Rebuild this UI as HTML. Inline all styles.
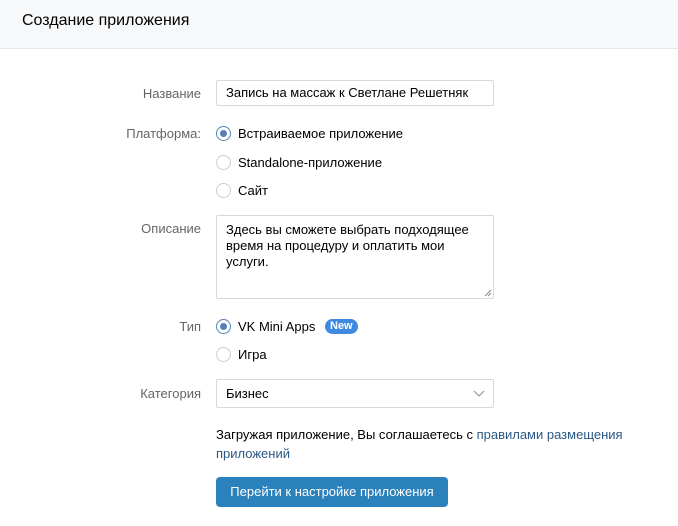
<!DOCTYPE html>
<html><head><meta charset="utf-8"><style>
*{box-sizing:border-box;margin:0;padding:0}
body{width:678px;height:526px;background:#fff;font-family:"Liberation Sans",sans-serif;font-size:13px;color:#000;position:relative;overflow:hidden}
.hd{position:absolute;left:0;top:0;width:678px;height:49px;background:#f7f8fa;border-bottom:1px solid #e7e8ec}
.hd span{position:absolute;left:22px;top:12px;font-size:16px;color:#000}
.lb{position:absolute;right:477px;color:#656565;text-align:right;white-space:nowrap}
.ab{position:absolute;white-space:nowrap}
.inp{position:absolute;left:216px;width:278px;border:1px solid #d3d9de;border-radius:2px;background:#fff;padding:0 9px}
.r{position:absolute;left:216px;width:15px;height:15px;border:1px solid #c5cdd5;border-radius:50%;background:#fff}
.r.on{border-color:#5181b8}
.r.on::after{content:"";position:absolute;left:3px;top:3px;width:7px;height:7px;border-radius:50%;background:#5181b8}
.rt{position:absolute;left:238px;white-space:nowrap}
</style></head><body>
<div class="hd"><span>Создание приложения</span></div>

<div class="lb" style="top:86px">Название</div>
<div class="inp" style="top:80px;height:26px;line-height:24px">Запись на массаж к Светлане Решетняк</div>

<div class="lb" style="top:126px">Платформа:</div>
<div class="r on" style="top:126px"></div><div class="rt" style="top:126px">Встраиваемое приложение</div>
<div class="r" style="top:155px"></div><div class="rt" style="top:155px">Standalone-приложение</div>
<div class="r" style="top:183px"></div><div class="rt" style="top:183px">Сайт</div>

<div class="lb" style="top:221px">Описание</div>
<div class="inp" style="top:215px;height:84px;padding-top:6px;line-height:16px">Здесь вы сможете выбрать подходящее время на процедуру и оплатить мои услуги.
<svg style="position:absolute;right:1px;bottom:1px" width="8" height="8"><path d="M7 1L1 7M7 4L4 7" stroke="#888" stroke-width="1"/></svg></div>

<div class="lb" style="top:319px">Тип</div>
<div class="r on" style="top:319px"></div><div class="rt" style="top:319px">VK Mini Apps</div>
<div class="ab" style="left:325px;top:319px;height:15px;padding:0 5px;background:#3f8ae0;color:#fff;border-radius:8px;font-size:11px;font-weight:bold;line-height:15px">New</div>
<div class="r" style="top:347px"></div><div class="rt" style="top:347px">Игра</div>

<div class="lb" style="top:386px">Категория</div>
<div class="inp" style="top:379px;height:29px;line-height:27px">Бизнес
<svg style="position:absolute;right:8px;top:10px" width="12" height="8"><path d="M1 1L6 6L11 1" stroke="#a0a6ad" stroke-width="1.3" fill="none"/></svg></div>

<div class="ab" style="left:216px;top:425px;line-height:19px">Загружая приложение, Вы соглашаетесь с <span style="color:#2a5885">правилами размещения</span><br><span style="color:#2a5885">приложений</span></div>

<div class="ab" style="left:216px;top:477px;width:232px;height:30px;background:#2a81bc;border-radius:4px;color:#fff;text-align:center;line-height:30px">Перейти к настройке приложения</div>
</body></html>
